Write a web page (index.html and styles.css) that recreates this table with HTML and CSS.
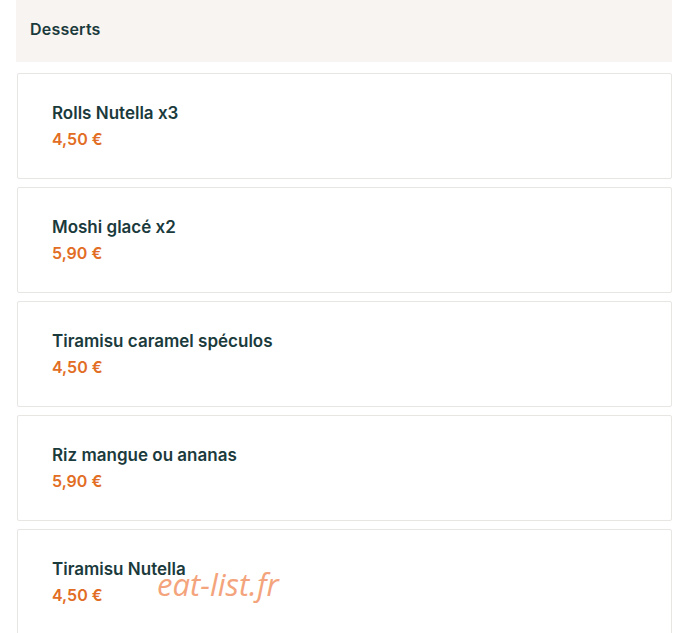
FILE: index.html
```html
<!doctype html>
<html>
<head>
  <meta charset="utf-8">
  <title>Desserts</title>
  <link rel="stylesheet" href="styles.css">
</head>
<body>
  <div class="menu">
    <h3 class="menu-title">Desserts</h3>

    <ul class="dish-list">
      <li class="dish">
        <div class="dish-name">Rolls Nutella x3</div>
        <div class="dish-price">4,50 €</div>
      </li>
      <li class="dish">
        <div class="dish-name">Moshi glacé x2</div>
        <div class="dish-price">5,90 €</div>
      </li>
      <li class="dish">
        <div class="dish-name">Tiramisu caramel spéculos</div>
        <div class="dish-price">4,50 €</div>
      </li>
      <li class="dish">
        <div class="dish-name">Riz mangue ou ananas</div>
        <div class="dish-price">5,90 €</div>
      </li>
      <li class="dish">
        <div class="dish-name">Tiramisu Nutella</div>
        <div class="dish-price">4,50 € <span class="watermark">eat-list.fr</span></div>
      </li>
    </ul>
  </div>
</body>
</html>
```

FILE: styles.css
```css
body {
  margin: 0;
  background-color: #fff;
  font-family: Inter, "Noto Sans", sans-serif;
  color: #1b3a3c;
}
.menu {
  width: 656px;
  margin-left: 16px;
}
.menu-title {
  margin: 0;
  height: 62px;
  padding-left: 14px;
  display: flex;
  align-items: center;
  padding-bottom: 4px;
  box-sizing: border-box;
  background-color: #f8f4f1;
  font-size: 16px;
  font-weight: 600;
  letter-spacing: 0.2px;
}
.dish-list {
  list-style: none;
  margin: 11px 0 0 1px;
  padding: 0;
  display: flex;
  flex-direction: column;
  gap: 8px;
}
.dish {
  height: 106px;
  box-sizing: border-box;
  padding: 29px 34px 0;
  border: 1px solid #e8e6e3;
  border-radius: 2px;
}
.dish-name {
  font-size: 17px;
  font-weight: 600;
  line-height: 20px;
}
.dish-price {
  position: relative;
  margin-top: 6px;
  font-size: 16px;
  font-weight: 600;
  line-height: 20px;
  color: #e26d24;
}
.watermark {
  position: absolute;
  left: 105px;
  top: -11px;
  font-family: "Open Sans", sans-serif;
  font-style: italic;
  font-weight: 400;
  font-size: 31px;
  color: #f4a47c;
}
```
